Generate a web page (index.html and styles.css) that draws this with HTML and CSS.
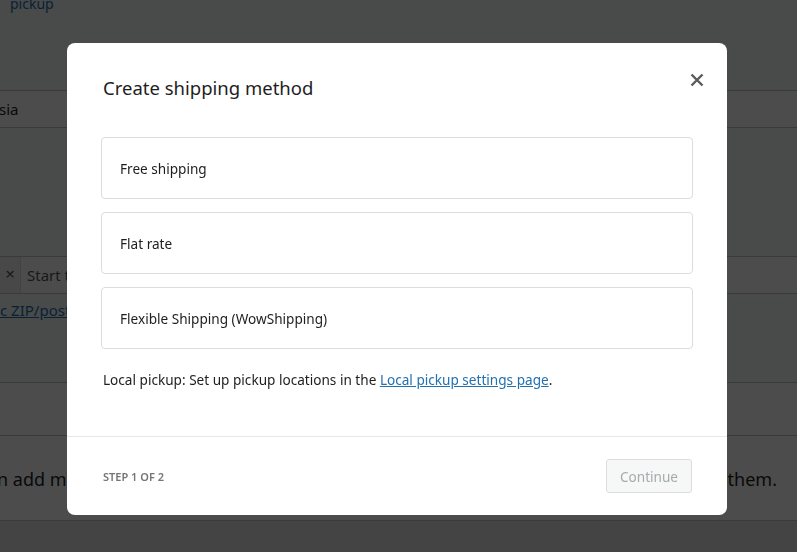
FILE: index.html
```html
<!DOCTYPE html>
<html lang="en">
<head>
  <meta charset="UTF-8">
  <meta name="viewport" content="width=device-width, initial-scale=1.0">
  <title>Create shipping method</title>
  <link rel="stylesheet" href="styles.css">
</head>
<body>
  <div class="page">
    <div class="top-link"><a href="#">pickup</a></div>

    <div class="field">
      <div class="field-input">sia</div>
    </div>

    <div class="tokens">
      <span class="token-x">&times;</span>
      <span class="token-text">Start typing to filter zones</span>
    </div>
    <div class="zip-link"><a href="#">c ZIP/postcodes</a></div>

    <div class="row-rule"></div>
    <div class="row-note">
      <span>n add multiple shipping methods within this zone.</span>
      <span>them.</span>
    </div>
    <div class="page-foot"></div>
  </div>

  <!-- Modal -->
  <div class="overlay"></div>
  <div class="modal">
    <div class="modal-head">
      <h2 class="modal-title">Create shipping method</h2>
      <button class="modal-close" aria-label="Close">
        <svg width="14" height="14" viewBox="0 0 14 14">
          <path d="M1.5 1.5 L12.5 12.5 M12.5 1.5 L1.5 12.5" stroke="#5a5a5a" stroke-width="2.4" fill="none"/>
        </svg>
      </button>
    </div>

    <div class="modal-body">
      <div class="option">Free shipping</div>
      <div class="option">Flat rate</div>
      <div class="option">Flexible Shipping (WowShipping)</div>
      <p class="pickup-note">Local pickup: Set up pickup locations in the <a href="#">Local pickup settings page</a>.</p>
    </div>

    <div class="modal-foot">
      <span class="step">Step 1 of 2</span>
      <button class="btn-continue" disabled>Continue</button>
    </div>
  </div>
</body>
</html>
```

FILE: styles.css
```css
body {
  margin: 0;
  font-family: "Noto Sans", "Open Sans", sans-serif;
  overflow: hidden;
}

/* page behind the modal */
.page {
  height: 552px;
  background: #f6f7f7;
  color: #1e1e1e;
  font-size: 14px;
}

.page a {
  color: #2271b1;
}

.top-link {
  height: 90px;
  padding-left: 10px;
  font-size: 14px;
  line-height: 8px;
}

.top-link a {
  text-decoration: none;
}

.field {
  height: 36px;
  border-top: 1px solid #c3c4c7;
  border-bottom: 1px solid #c3c4c7;
  background: #fff;
}

.field-input {
  padding-left: 0;
  line-height: 36px;
  font-size: 15px;
  margin-left: -1px;
}

.tokens {
  display: flex;
  align-items: center;
  height: 36px;
  margin-top: 128px;
  border-top: 1px solid #c3c4c7;
  border-bottom: 1px solid #c3c4c7;
  background: #fff;
  font-size: 15px;
  color: #50575e;
}

.token-x {
  width: 20px;
  height: 36px;
  line-height: 34px;
  text-align: center;
  background: #f0f0f1;
  border-right: 1px solid #dcdcde;
  font-size: 17px;
}

.token-text {
  padding-left: 6px;
}

.zip-link {
  padding-top: 6px;
  font-size: 15px;
}

.row-rule {
  margin-top: 62px;
  height: 52px;
  border-top: 1px solid #c3c4c7;
  border-bottom: 1px solid #c3c4c7;
  background: #fff;
}

.row-note {
  display: flex;
  justify-content: space-between;
  height: 84px;
  padding-right: 20px;
  background: #fff;
  font-size: 18px;
  line-height: 86px;
  margin-left: -3px;
  border-bottom: 1px solid #c3c4c7;
}

.page-foot {
  height: 40px;
  background: #e4e4e6;
}

.overlay {
  position: fixed;
  inset: 0;
  background: rgba(0, 0, 0, 0.7);
}

/* modal */
.modal {
  position: fixed;
  top: 43px;
  left: 67px;
  width: 660px;
  height: 472px;
  background: #fff;
  border-radius: 8px;
  color: #1e1e1e;
  display: flex;
  flex-direction: column;
}

.modal-head {
  display: flex;
  justify-content: space-between;
  align-items: center;
  padding: 31px 14px 0 36px;
}

.modal-title {
  margin: 0;
  font-size: 18.5px;
  font-weight: 400;
  line-height: 28px;
}

.modal-close {
  width: 32px;
  height: 32px;
  margin-top: -16px;
  border: 0;
  padding: 0;
  background: none;
  display: flex;
  align-items: center;
  justify-content: center;
}

.modal-body {
  padding: 35px 34px 0;
  flex: 1;
  border-bottom: 1px solid #e8e8e8;
}

.option {
  height: 60px;
  display: flex;
  align-items: center;
  padding-left: 18px;
  border: 1px solid #dcdcde;
  border-radius: 4px;
  margin-bottom: 13px;
  font-size: 13.6px;
}

.pickup-note {
  margin: 21px 0 0 2px;
  font-size: 13.6px;
  line-height: 20px;
}

.pickup-note a {
  color: #2271b1;
}

.modal-foot {
  height: 78px;
  display: flex;
  align-items: center;
  justify-content: space-between;
  padding: 0 35px 0 36px;
}

.step {
  font-size: 11px;
  font-weight: 600;
  text-transform: uppercase;
  color: #757575;
}

.btn-continue {
  width: 86px;
  height: 34px;
  padding: 0;
  font-family: inherit;
  font-size: 13.6px;
  color: #a7aaad;
  background: #f6f7f7;
  border: 1px solid #dcdcde;
  border-radius: 3px;
}
```
